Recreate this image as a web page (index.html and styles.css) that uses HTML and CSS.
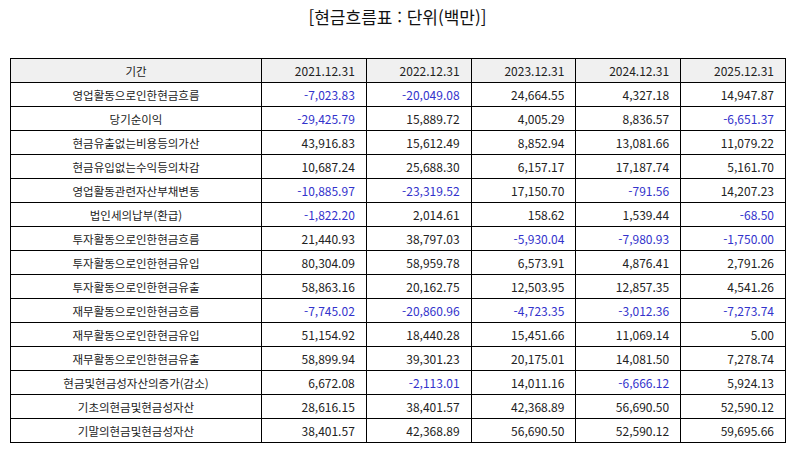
FILE: index.html
```html
<!DOCTYPE html>
<html lang="ko">
<head>
<meta charset="utf-8">
<title>현금흐름표</title>
<link rel="stylesheet" href="styles.css">
</head>
<body>
<div class="page">
  <h1 class="title">[현금흐름표 : 단위(백만)]</h1>
  <table class="cf">
    <thead>
      <tr><th class="label">기간</th><th>2021.12.31</th><th>2022.12.31</th><th>2023.12.31</th><th>2024.12.31</th><th>2025.12.31</th></tr>
    </thead>
    <tbody>
      <tr><td class="label">영업활동으로인한현금흐름</td><td class="neg">-7,023.83</td><td class="neg">-20,049.08</td><td>24,664.55</td><td>4,327.18</td><td>14,947.87</td></tr>
      <tr><td class="label">당기순이익</td><td class="neg">-29,425.79</td><td>15,889.72</td><td>4,005.29</td><td>8,836.57</td><td class="neg">-6,651.37</td></tr>
      <tr><td class="label">현금유출없는비용등의가산</td><td>43,916.83</td><td>15,612.49</td><td>8,852.94</td><td>13,081.66</td><td>11,079.22</td></tr>
      <tr><td class="label">현금유입없는수익등의차감</td><td>10,687.24</td><td>25,688.30</td><td>6,157.17</td><td>17,187.74</td><td>5,161.70</td></tr>
      <tr><td class="label">영업활동관련자산부채변동</td><td class="neg">-10,885.97</td><td class="neg">-23,319.52</td><td>17,150.70</td><td class="neg">-791.56</td><td>14,207.23</td></tr>
      <tr><td class="label">법인세의납부(환급)</td><td class="neg">-1,822.20</td><td>2,014.61</td><td>158.62</td><td>1,539.44</td><td class="neg">-68.50</td></tr>
      <tr><td class="label">투자활동으로인한현금흐름</td><td>21,440.93</td><td>38,797.03</td><td class="neg">-5,930.04</td><td class="neg">-7,980.93</td><td class="neg">-1,750.00</td></tr>
      <tr><td class="label">투자활동으로인한현금유입</td><td>80,304.09</td><td>58,959.78</td><td>6,573.91</td><td>4,876.41</td><td>2,791.26</td></tr>
      <tr><td class="label">투자활동으로인한현금유출</td><td>58,863.16</td><td>20,162.75</td><td>12,503.95</td><td>12,857.35</td><td>4,541.26</td></tr>
      <tr><td class="label">재무활동으로인한현금흐름</td><td class="neg">-7,745.02</td><td class="neg">-20,860.96</td><td class="neg">-4,723.35</td><td class="neg">-3,012.36</td><td class="neg">-7,273.74</td></tr>
      <tr><td class="label">재무활동으로인한현금유입</td><td>51,154.92</td><td>18,440.28</td><td>15,451.66</td><td>11,069.14</td><td>5.00</td></tr>
      <tr><td class="label">재무활동으로인한현금유출</td><td>58,899.94</td><td>39,301.23</td><td>20,175.01</td><td>14,081.50</td><td>7,278.74</td></tr>
      <tr><td class="label">현금및현금성자산의증가(감소)</td><td>6,672.08</td><td class="neg">-2,113.01</td><td>14,011.16</td><td class="neg">-6,666.12</td><td>5,924.13</td></tr>
      <tr><td class="label">기초의현금및현금성자산</td><td>28,616.15</td><td>38,401.57</td><td>42,368.89</td><td>56,690.50</td><td>52,590.12</td></tr>
      <tr><td class="label">기말의현금및현금성자산</td><td>38,401.57</td><td>42,368.89</td><td>56,690.50</td><td>52,590.12</td><td>59,695.66</td></tr>
    </tbody>
  </table>
</div>
</body>
</html>
```

FILE: styles.css
```css
html, body {
  margin: 0;
  padding: 0;
  background: #ffffff;
}
.page {
  padding: 0 9px 0 10px;
  font-family: "Noto Sans CJK KR", "Noto Sans", "DejaVu Sans", sans-serif;
  color: #222;
}
.title {
  margin: 0;
  height: 58px;
  padding-top: 5px;
  box-sizing: border-box;
  text-align: center;
  font-size: 17px;
  font-weight: normal;
  line-height: 24px;
  color: #111;
}
.cf {
  width: 776px;
  border-collapse: collapse;
  table-layout: fixed;
  font-size: 12px;
}
.cf th, .cf td {
  border: 1px solid #000;
  height: 23px;
  padding: 0 11px 0 6px;
  text-align: right;
  font-weight: normal;
  line-height: 14px;
  white-space: nowrap;
  color: #222;
}
.cf th {
  background: #f0f0f0;
}
.cf .label {
  width: 250px;
  text-align: center;
  padding: 0;
  font-size: 11.5px;
}
.cf td.neg {
  color: #3333cc;
}
```
